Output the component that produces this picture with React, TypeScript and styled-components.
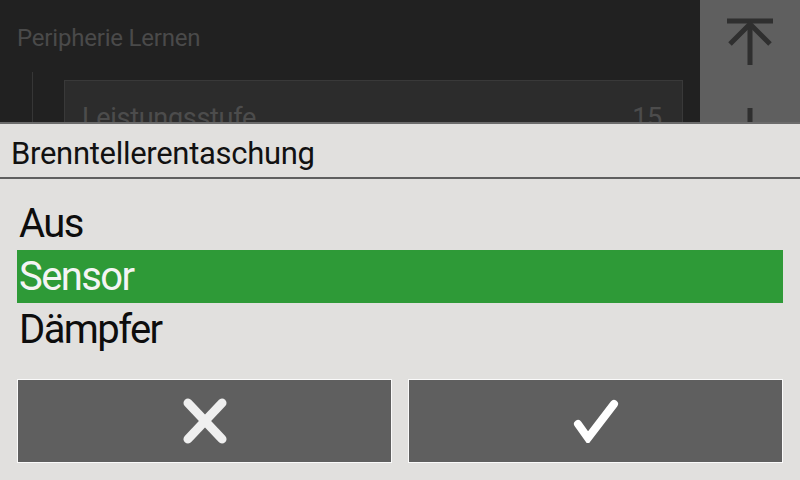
import React from "react";
import styled, { createGlobalStyle } from "styled-components";

const Global = createGlobalStyle`
  html, body { margin: 0; padding: 0; background: #212121; }
  * { box-sizing: border-box; }
`;

const Screen = styled.div`
  position: relative;
  width: 800px;
  height: 480px;
  overflow: hidden;
  background: #212121;
  font-family: Roboto, "Noto Sans", sans-serif;
  display: flex;
`;

const Main = styled.div`
  flex: 1;
  display: flex;
  flex-direction: column;
  padding: 0 17px 0 17px;
`;

const PageTitle = styled.div`
  height: 72px;
  padding-top: 24px;
  font-size: 24px;
  line-height: 28px;
  color: #4a4a4a;
  letter-spacing: -0.2px;
`;

const Indent = styled.div`
  flex: 1;
  margin-left: 15px;
  border-left: 1px solid #363636;
  padding: 8px 0 0 31px;
`;

const Card = styled.div`
  height: 80px;
  background: #2c2c2c;
  border: 1px solid #393939;
  display: flex;
  justify-content: space-between;
  align-items: flex-start;
  padding: 21px 20px 0 17px;
  font-size: 27px;
  color: #4c4c4c;
  letter-spacing: -0.3px;
`;

const Side = styled.div`
  width: 100px;
  background: #5f5f5f;
  display: flex;
  flex-direction: column;
  align-items: center;
  padding-top: 16px;
  gap: 40px;
`;

const Dialog = styled.div`
  position: absolute;
  left: 0;
  right: 0;
  top: 122px;
  bottom: 0;
  background: #e1e0de;
  border-top: 2px solid #6b6b6b;
  display: flex;
  flex-direction: column;
`;

const DialogTitle = styled.div`
  height: 55px;
  border-bottom: 2px solid #5f5f5f;
  padding: 10px 0 0 11px;
  font-size: 31px;
  line-height: 40px;
  color: #111;
  letter-spacing: -0.3px;
`;

const OptionList = styled.div`
  display: flex;
  flex-direction: column;
  padding: 18px 17px 0 17px;
`;

const Option = styled.div<{ $selected?: boolean }>`
  height: 53px;
  display: flex;
  align-items: center;
  padding-left: 2px;
  font-size: 40px;
  color: ${(p) => (p.$selected ? "#f4f4f4" : "#0d0d0d")};
  background: ${(p) => (p.$selected ? "#2e9a37" : "transparent")};
  letter-spacing: -1.6px;
`;

const ButtonRow = styled.div`
  display: grid;
  grid-template-columns: 1fr 1fr;
  gap: 16px;
  padding: 23px 17px 0 17px;
`;

const ActionButton = styled.div`
  height: 84px;
  background: #5f5f5f;
  border: 1px solid #fafafa;
  display: flex;
  align-items: center;
  justify-content: center;
`;

const ArrowTop = () => (
  <svg width="48" height="50" viewBox="0 0 48 50">
    <g stroke="#2f2f2f" strokeWidth="5" fill="none">
      <line x1="1" y1="5" x2="47" y2="5" />
      <line x1="24" y1="8" x2="24" y2="49" />
      <polyline points="4,28 24,8 44,28" strokeLinecap="butt" />
    </g>
  </svg>
);

const ArrowUp = () => (
  <svg width="48" height="50" viewBox="0 0 48 50">
    <g stroke="#2f2f2f" strokeWidth="5" fill="none">
      <line x1="24" y1="2" x2="24" y2="49" />
    </g>
  </svg>
);

const CrossIcon = () => (
  <svg width="46" height="46" viewBox="0 0 46 46">
    <g stroke="#efefef" strokeWidth="9" strokeLinecap="round" fill="none">
      <line x1="6" y1="5" x2="40" y2="41" />
      <line x1="40" y1="5" x2="6" y2="41" />
    </g>
  </svg>
);

const CheckIcon = () => (
  <svg width="48" height="44" viewBox="0 0 48 44">
    <polyline
      points="6,25 16,39 42,5"
      stroke="#ffffff"
      strokeWidth="8"
      strokeLinecap="round"
      strokeLinejoin="miter"
      fill="none"
    />
  </svg>
);

export default function App() {
  return (
    <>
      <Global />
      <Screen>
        <Main>
          <PageTitle>Peripherie Lernen</PageTitle>
          <Indent>
            <Card>
              <span>Leistungsstufe</span>
              <span>15</span>
            </Card>
          </Indent>
        </Main>
        <Side>
          <ArrowTop />
          <ArrowUp />
        </Side>
        <Dialog>
          <DialogTitle>Brenntellerentaschung</DialogTitle>
          <OptionList>
            <Option>Aus</Option>
            <Option $selected>Sensor</Option>
            <Option>Dämpfer</Option>
          </OptionList>
          <ButtonRow>
            <ActionButton>
              <CrossIcon />
            </ActionButton>
            <ActionButton>
              <CheckIcon />
            </ActionButton>
          </ButtonRow>
        </Dialog>
      </Screen>
    </>
  );
}
